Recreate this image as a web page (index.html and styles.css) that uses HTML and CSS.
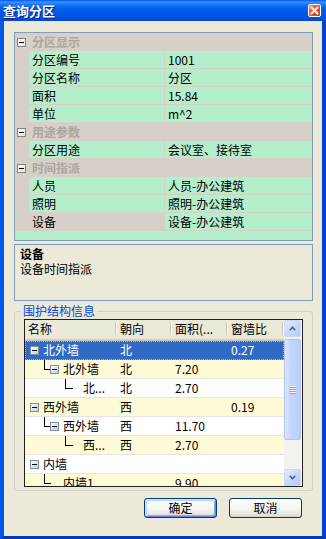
FILE: index.html
```html
<!DOCTYPE html>
<html>
<head>
<meta charset="utf-8">
<title>查询分区</title>
<link rel="stylesheet" href="styles.css">
</head>
<body>
<div class="window">
  <div class="titlebar">
    <span class="title">查询分区</span>
    <span class="close"><svg width="11" height="11" viewBox="0 0 11 11"><path d="M2.5 2.5 L8.5 8.5 M8.5 2.5 L2.5 8.5" stroke="#fff" stroke-width="1.9" stroke-linecap="square" fill="none"/></svg></span>
  </div>
  <div class="client">
    <div class="pgrid">
      <div class="cat"><span class="margin"><i class="pm"></i></span><span class="cat-label">分区显示</span></div>
      <div class="prow"><span class="margin"></span><span class="pname">分区编号</span><span class="pval">1001</span></div>
      <div class="prow"><span class="margin"></span><span class="pname">分区名称</span><span class="pval">分区</span></div>
      <div class="prow"><span class="margin"></span><span class="pname">面积</span><span class="pval">15.84</span></div>
      <div class="prow"><span class="margin"></span><span class="pname">单位</span><span class="pval">m^2</span></div>
      <div class="cat"><span class="margin"><i class="pm"></i></span><span class="cat-label">用途参数</span></div>
      <div class="prow"><span class="margin"></span><span class="pname">分区用途</span><span class="pval">会议室、接待室</span></div>
      <div class="cat"><span class="margin"><i class="pm"></i></span><span class="cat-label">时间指派</span></div>
      <div class="prow"><span class="margin"></span><span class="pname">人员</span><span class="pval">人员-办公建筑</span></div>
      <div class="prow"><span class="margin"></span><span class="pname">照明</span><span class="pval">照明-办公建筑</span></div>
      <div class="prow"><span class="margin"></span><span class="pname selected">设备</span><span class="pval">设备-办公建筑</span></div>
      <div class="pfill"></div>
    </div>

    <div class="desc">
      <div class="desc-title">设备</div>
      <div>设备时间指派</div>
    </div>

    <fieldset class="group">
      <legend>围护结构信息</legend>
      <div class="tree">
        <div class="list">
          <div class="thead">
            <span class="th w1"><span>名称</span></span>
            <span class="th w2"><span>朝向</span></span>
            <span class="th w3"><span>面积(...</span></span>
            <span class="th w4"><span>窗墙比</span></span>
          </div>
          <div class="trow sel">
            <span class="c c1"><i class="tbox l1"></i><span class="lbl">北外墙</span></span>
            <span class="c w2">北</span><span class="c w3"></span><span class="c w4">0.27</span>
          </div>
          <div class="trow alt">
            <span class="c c1"><i class="elbow e2"></i><i class="tbox"></i><span class="lbl">北外墙</span></span>
            <span class="c w2">北</span><span class="c w3">7.20</span><span class="c w4"></span>
          </div>
          <div class="trow">
            <span class="c c1"><i class="elbow e3"></i><span class="lbl l3">北...</span></span>
            <span class="c w2">北</span><span class="c w3">2.70</span><span class="c w4"></span>
          </div>
          <div class="trow alt">
            <span class="c c1"><i class="tbox l1"></i><span class="lbl">西外墙</span></span>
            <span class="c w2">西</span><span class="c w3"></span><span class="c w4">0.19</span>
          </div>
          <div class="trow">
            <span class="c c1"><i class="elbow e2"></i><i class="tbox"></i><span class="lbl">西外墙</span></span>
            <span class="c w2">西</span><span class="c w3">11.70</span><span class="c w4"></span>
          </div>
          <div class="trow alt">
            <span class="c c1"><i class="elbow e3"></i><span class="lbl l3">西...</span></span>
            <span class="c w2">西</span><span class="c w3">2.70</span><span class="c w4"></span>
          </div>
          <div class="trow">
            <span class="c c1"><i class="tbox l1"></i><span class="lbl">内墙</span></span>
            <span class="c w2"></span><span class="c w3"></span><span class="c w4"></span>
          </div>
          <div class="trow alt">
            <span class="c c1"><i class="elbow e2 leaf"></i><span class="lbl l2leaf">内墙1</span></span>
            <span class="c w2"></span><span class="c w3">9.90</span><span class="c w4"></span>
          </div>
        </div>
        <div class="vscroll">
          <span class="sbtn"><svg width="7" height="5" viewBox="0 0 7 5"><polyline points="0.8,4.2 3.5,1.2 6.2,4.2" fill="none" stroke="#4D6185" stroke-width="1.6"/></svg></span>
          <span class="thumb"><i class="grip"></i></span>
          <span class="track"></span>
          <span class="sbtn"><svg width="7" height="5" viewBox="0 0 7 5"><polyline points="0.8,0.8 3.5,3.8 6.2,0.8" fill="none" stroke="#4D6185" stroke-width="1.6"/></svg></span>
        </div>
      </div>
    </fieldset>

    <div class="buttons">
      <button class="btn default">确定</button>
      <button class="btn">取消</button>
    </div>
  </div>
</div>
</body>
</html>
```
FILE: styles.css
```css
* { box-sizing: border-box; }
html, body { margin: 0; padding: 0; }
body {
  font-family: "Noto Sans CJK SC", "Noto Sans", sans-serif;
  font-size: 12px;
  color: #000;
  background: #fff;
}
.window {
  width: 326px;
  height: 539px;
  display: flex;
  flex-direction: column;
  background: #0054E3;
  overflow: hidden;
}
.titlebar {
  height: 21px;
  flex: none;
  display: flex;
  align-items: center;
  padding: 0 5px 0 3px;
  background: linear-gradient(to bottom, #0058EE 0%, #3A93FF 10%, #1E74F8 22%, #0060EE 40%, #0056E5 65%, #0052DD 88%, #0046CA 100%);
}
.title {
  color: #fff;
  font-size: 13px;
  font-weight: bold;
  line-height: 16px;
  text-shadow: 1px 1px 0 #0F1A8B;
}
.close {
  margin-left: auto;
  width: 13px;
  height: 13px;
  border: 1px solid #fff;
  border-radius: 2px;
  background: linear-gradient(135deg, #F2A080 0%, #E6603A 35%, #D84A24 70%, #C43C1C 100%);
  display: flex;
  align-items: center;
  justify-content: center;
}
.client {
  flex: 1;
  background: #ECE9D8;
  border-style: solid;
  border-width: 0 4px 3px 4px;
  border-color: #0054E3 #0042C9 #003BB8 #0058E6;
  padding: 11px 9px 0 10px;
  display: flex;
  flex-direction: column;
}

/* property grid */
.pgrid {
  flex: none;
  height: 209px;
  border: 1px solid #7F9DB9;
  background: #B4EECB;
  display: flex;
  flex-direction: column;
}
.cat {
  flex: none;
  height: 18px;
  display: flex;
  background: #D6D0C8;
}
.cat .margin {
  width: 14px;
  display: flex;
  align-items: center;
  padding-left: 2px;
}
.pm {
  width: 9px;
  height: 9px;
  border: 1px solid #848284;
  background: linear-gradient(135deg, #FFFFFF 0%, #E4E2DA 100%);
  display: flex;
  align-items: center;
  justify-content: center;
}
.pm::after, .tbox::after {
  content: "";
  width: 5px;
  height: 1px;
  background: #000;
}
.cat-label {
  padding-left: 3px;
  font-weight: bold;
  color: #ADA69C;
  line-height: 18px;
}
.prow {
  flex: none;
  height: 18px;
  display: flex;
}
.prow .margin {
  flex: none;
  width: 14px;
  background: #D6D0C8;
}
.pname {
  flex: none;
  width: 136px;
  border-right: 1px solid #D6D0C8;
  border-bottom: 1px solid #D6D0C8;
  padding-left: 3px;
  line-height: 17px;
}
.pname.selected { background: #D6D0C8; }
.pval {
  flex: 1;
  border-bottom: 1px solid #D6D0C8;
  padding-left: 3px;
  line-height: 17px;
  white-space: nowrap;
}
.pfill { flex: 1; }

/* description */
.desc {
  flex: none;
  margin-top: 3px;
  height: 57px;
  border: 1px solid #7F9DB9;
  padding: 1px 5px;
  line-height: 15px;
}
.desc-title { font-weight: bold; }

/* group */
.group {
  flex: none;
  margin: 3px 0 0 0;
  padding: 1px 9px 3px 9px;
  border: 1px solid #D0D0BF;
  border-radius: 3px;
  min-width: 0;
}
.group legend {
  padding: 0 2px;
  margin-left: -3px;
  color: #0046D5;
  line-height: 14px;
}
.tree {
  height: 168px;
  border: 1px solid #1E1E1E;
  background: #fff;
  display: flex;
}
.list {
  width: 259px;
  flex: none;
  display: flex;
  flex-direction: column;
  overflow: hidden;
}
.thead {
  flex: none;
  height: 21px;
  display: flex;
  background: #EBEAD8;
  box-shadow: inset 0 -1px #CBC7B8, inset 0 -2px #D6D2C2, inset 0 -3px #E2DECD;
}
.th {
  display: flex;
  justify-content: space-between;
  align-items: flex-start;
  padding-left: 3px;
  line-height: 18px;
  white-space: nowrap;
}
.th::after {
  content: "";
  flex: none;
  width: 2px;
  height: 13px;
  margin-top: 2px;
  background: linear-gradient(to right, #C7C5B2 50%, #FFFFFF 50%);
}
.w1, .c1 { width: 92px; flex: none; }
.w2 { width: 55px; flex: none; }
.w3 { width: 56px; flex: none; }
.w4 { width: 56px; flex: none; }
.trow {
  flex: none;
  height: 19px;
  display: flex;
  border-bottom: 1px solid #E4E4E4;
  line-height: 18px;
}
.trow.alt { background: #FFFBD6; }
.trow.sel {
  background: #316AC5;
  border-bottom-color: #316AC5;
  color: #fff;
  outline: 1px dotted #F3A43C;
  outline-offset: -1px;
}
.c {
  padding-left: 3px;
  white-space: nowrap;
  overflow: hidden;
}
.c.c1 {
  padding-left: 0;
  display: flex;
  align-items: center;
}
.tbox {
  flex: none;
  width: 9px;
  height: 9px;
  border: 1px solid #7F8FA6;
  background: linear-gradient(135deg, #FFFFFF 0%, #DCE2EA 55%, #C2CCD8 100%);
  display: flex;
  align-items: center;
  justify-content: center;
}
.tbox.l1 { margin-left: 5px; }
.lbl { margin-left: 4px; }
.lbl.l3 { margin-left: 10px; }
.lbl.l2leaf { margin-left: 12px; }
.elbow {
  flex: none;
  align-self: flex-start;
  height: 10px;
  border-left: 1px solid #000;
  border-bottom: 1px solid #000;
}
.elbow.e2 { margin-left: 19px; width: 6px; }
.elbow.e2.leaf { width: 7px; }
.elbow.e3 { margin-left: 40px; width: 8px; }

/* scrollbar */
.vscroll {
  width: 17px;
  flex: none;
  background: #F3F2EC;
  display: flex;
  flex-direction: column;
}
.sbtn {
  flex: none;
  height: 17px;
  border: 1px solid #C9D7F8;
  border-radius: 2px;
  background: linear-gradient(135deg, #E4ECFE 0%, #C8D8FC 50%, #B6CAF8 100%);
  display: flex;
  align-items: center;
  justify-content: center;
}
.thumb {
  flex: none;
  margin-top: 2px;
  height: 101px;
  border: 1px solid #B0C4F2;
  border-radius: 2px;
  background: linear-gradient(to right, #DCE6FE 0%, #C6D7FC 35%, #BCCEFA 100%);
  display: flex;
  align-items: center;
  justify-content: center;
}
.grip {
  width: 7px;
  height: 8px;
  background: repeating-linear-gradient(to bottom, #EEF3FE 0 1px, #8CA6E4 1px 2px);
}
.track { flex: 1; }

/* buttons */
.buttons {
  display: flex;
  justify-content: flex-end;
  gap: 12px;
  margin-top: 7px;
  padding-right: 11px;
}
.btn {
  width: 73px;
  height: 20px;
  padding: 0;
  border: 1px solid #003C74;
  border-radius: 3px;
  background: linear-gradient(to bottom, #FFFFFF 0%, #F5F4EF 55%, #E8E6DC 85%, #D6D0C5 100%);
  font-family: "Noto Sans CJK SC", "Noto Sans", sans-serif;
  font-size: 12px;
  line-height: 18px;
  color: #000;
}
.btn.default {
  box-shadow: inset 1px 1px 0 #CEE7FF, inset -1px -1px 0 #6982EE, inset 2px 2px 0 #BCD4F6, inset -2px -2px 0 #89ADE4;
}
```
